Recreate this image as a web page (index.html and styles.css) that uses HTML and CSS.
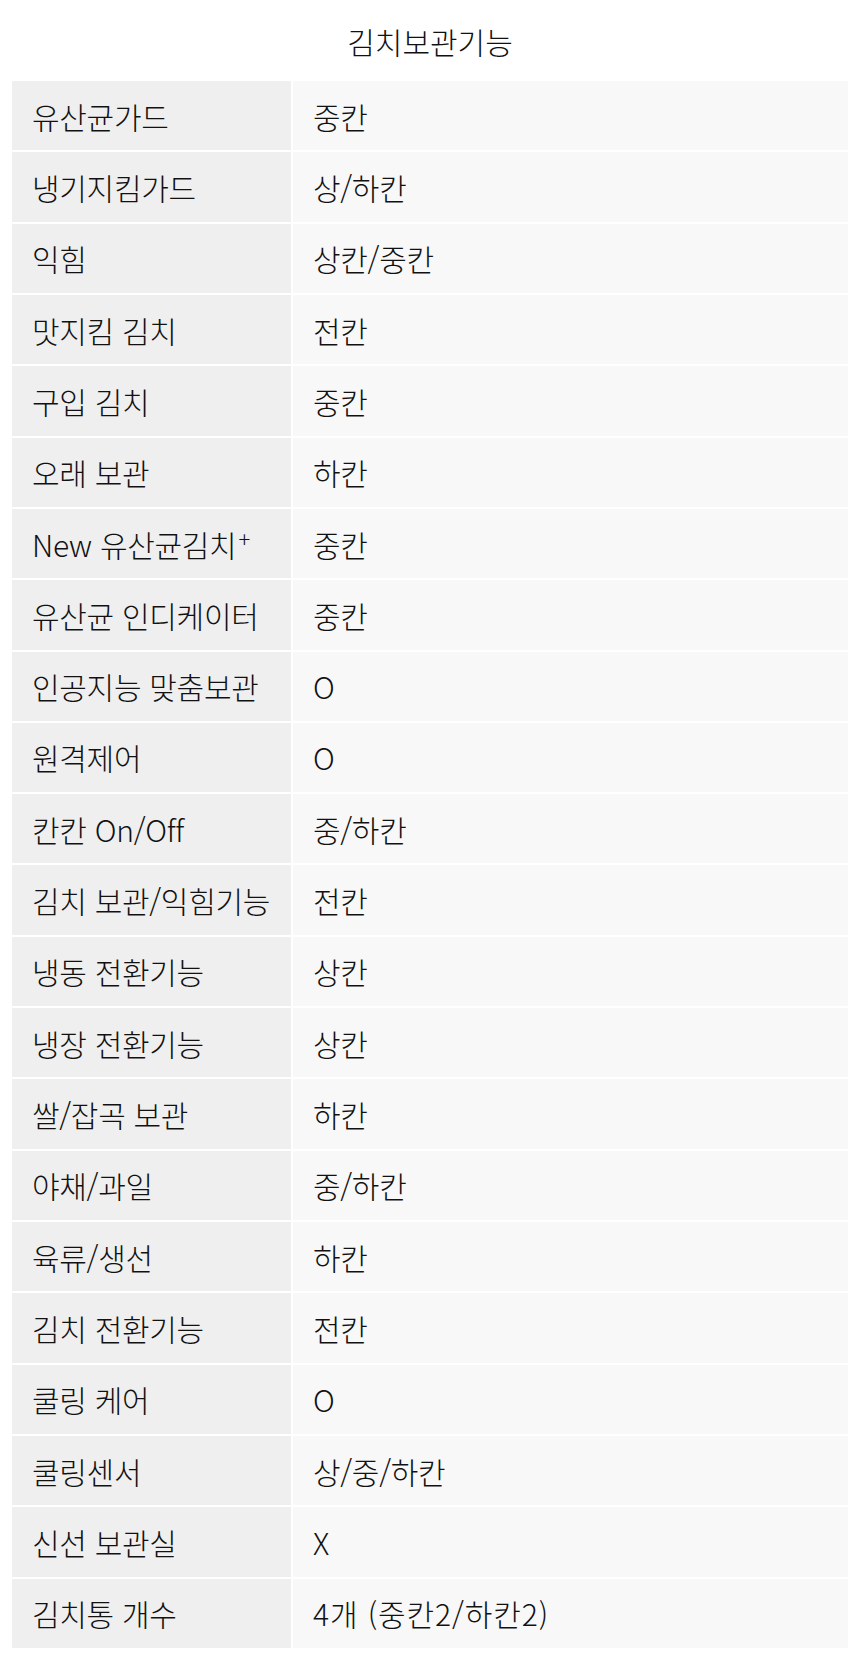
FILE: index.html
```html
<!DOCTYPE html>
<html lang="ko">
<head>
<meta charset="utf-8">
<title>김치보관기능</title>
<link rel="stylesheet" href="styles.css">
</head>
<body>
<div class="page">
  <h2 class="title">김치보관기능</h2>
  <table class="spec">
    <tbody>
      <tr><td class="k">유산균가드</td><td class="v">중칸</td></tr>
      <tr><td class="k">냉기지킴가드</td><td class="v">상/하칸</td></tr>
      <tr><td class="k">익힘</td><td class="v">상칸/중칸</td></tr>
      <tr><td class="k">맛지킴 김치</td><td class="v">전칸</td></tr>
      <tr><td class="k">구입 김치</td><td class="v">중칸</td></tr>
      <tr><td class="k">오래 보관</td><td class="v">하칸</td></tr>
      <tr><td class="k">New 유산균김치<sup>+</sup></td><td class="v">중칸</td></tr>
      <tr><td class="k">유산균 인디케이터</td><td class="v">중칸</td></tr>
      <tr><td class="k">인공지능 맞춤보관</td><td class="v">O</td></tr>
      <tr><td class="k">원격제어</td><td class="v">O</td></tr>
      <tr><td class="k">칸칸 On/Off</td><td class="v">중/하칸</td></tr>
      <tr><td class="k">김치 보관/익힘기능</td><td class="v">전칸</td></tr>
      <tr><td class="k">냉동 전환기능</td><td class="v">상칸</td></tr>
      <tr><td class="k">냉장 전환기능</td><td class="v">상칸</td></tr>
      <tr><td class="k">쌀/잡곡 보관</td><td class="v">하칸</td></tr>
      <tr><td class="k">야채/과일</td><td class="v">중/하칸</td></tr>
      <tr><td class="k">육류/생선</td><td class="v">하칸</td></tr>
      <tr><td class="k">김치 전환기능</td><td class="v">전칸</td></tr>
      <tr><td class="k">쿨링 케어</td><td class="v">O</td></tr>
      <tr><td class="k">쿨링센서</td><td class="v">상/중/하칸</td></tr>
      <tr><td class="k">신선 보관실</td><td class="v">X</td></tr>
      <tr><td class="k">김치통 개수</td><td class="v num">4개 (중칸2/하칸2)</td></tr>
    </tbody>
  </table>
</div>
</body>
</html>
```
FILE: styles.css
```css
html, body {
  margin: 0;
  padding: 0;
  background: #ffffff;
}
.page {
  padding: 0 10px;
  font-family: "Noto Sans CJK KR", "Noto Sans", sans-serif;
  font-weight: 300;
  color: #111111;
}
.title {
  margin: 0;
  height: 79px;
  box-sizing: border-box;
  padding-top: 2px;
  display: flex;
  align-items: center;
  justify-content: center;
  font-size: 30px;
  font-weight: 300;
  line-height: 1;
}
.spec {
  width: 100%;
  border-collapse: separate;
  border-spacing: 2px;
  table-layout: fixed;
}
.spec td {
  height: 69.32px;
  box-sizing: border-box;
  padding: 0 20px;
  font-size: 30px;
  line-height: 1;
  vertical-align: middle;
  white-space: nowrap;
  letter-spacing: -0.3px;
}
.spec .k {
  width: 279px;
  background: #efefef;
}
.spec .v {
  background: #f8f8f8;
}
.spec .num {
  letter-spacing: 0.9px;
}
.spec sup {
  font-size: 22px;
  vertical-align: 9px;
  line-height: 0;
  margin-left: 2px;
}
```
